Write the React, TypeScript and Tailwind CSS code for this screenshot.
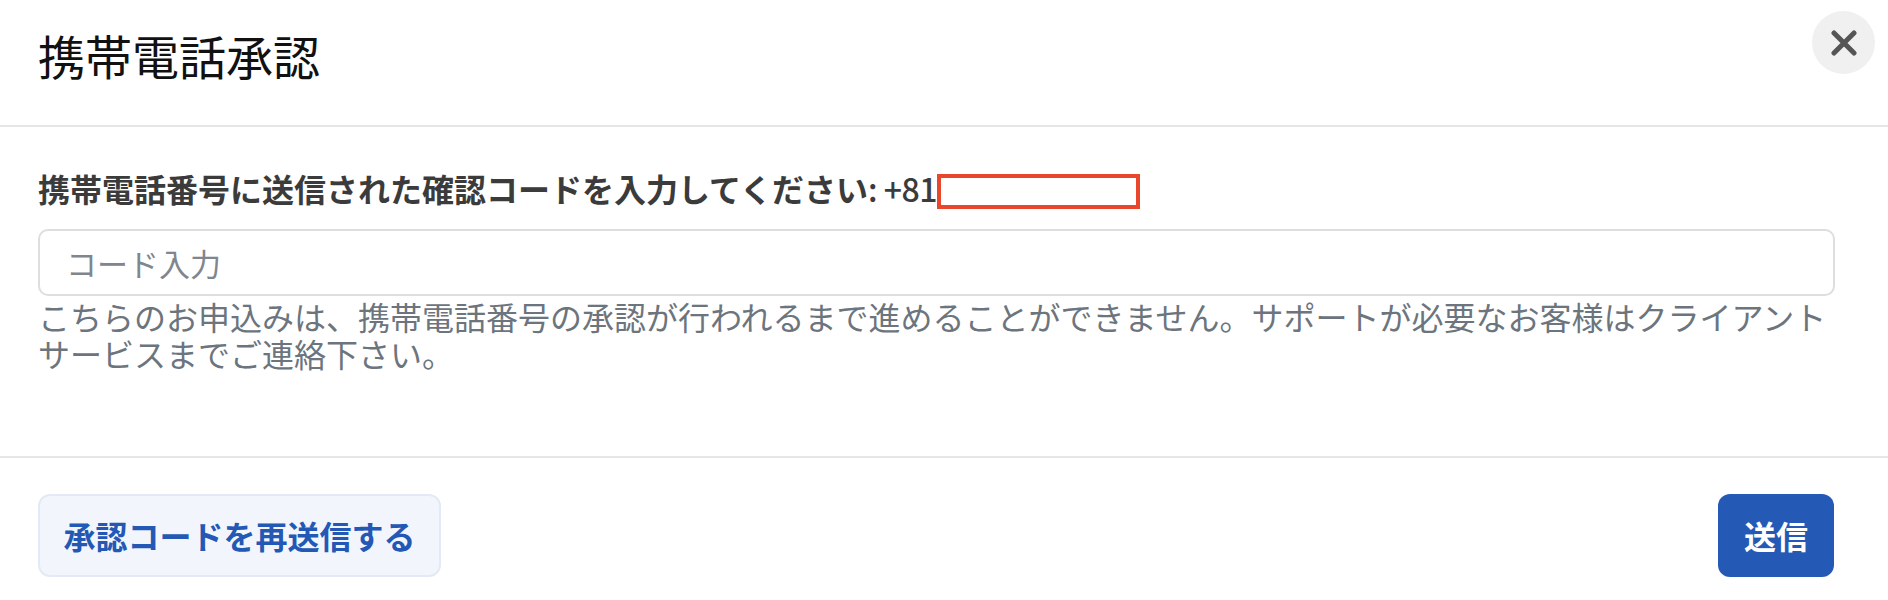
import React from "react";

// Mobile phone verification dialog (Japanese)
const FONT = "font-['Noto_Sans_CJK_JP','Noto_Sans',sans-serif]";

function CloseIcon() {
  return (
    <svg width="26" height="26" viewBox="0 0 26 26" fill="none" aria-hidden="true">
      <path d="M3 3L23 23M23 3L3 23" stroke="#555555" strokeWidth="5" strokeLinecap="round" />
    </svg>
  );
}

export default function App() {
  return (
    <div className={`w-[1888px] h-[600px] bg-white overflow-hidden flex flex-col ${FONT}`}>
      {/* Header */}
      <div className="flex justify-between items-start h-[127px] border-b-2 border-[#e6e6e6] shrink-0">
        <h1 className="pl-[38px] pt-[27px] text-[47px] leading-[56px] font-normal text-[#111111]">
          携帯電話承認
        </h1>
        <button className="mt-[11px] mr-[13px] w-[63px] h-[63px] rounded-full bg-[#f0f0f0] flex items-center justify-center">
          <CloseIcon />
        </button>
      </div>

      {/* Body */}
      <div className="pl-[38px] pr-[53px] pt-[41px] pb-[84px] shrink-0">
        <label className="block text-[32px] leading-[40px] font-bold text-[#3b3b3b] whitespace-nowrap">
          携帯電話番号に送信された確認コードを入力してください
          <span className="font-medium tracking-[-0.5px]">: +81</span>
          <span className="inline-block align-middle -mt-[4px] w-[203px] h-[35px] border-4 border-[#e9472c]" />
        </label>
        <input
          type="text"
          placeholder="コード入力"
          className="mt-[20px] block w-full h-[67px] rounded-[10px] border-2 border-[#dedede] px-[26px] text-[31px] text-[#333333] placeholder:text-[#80868e] outline-none"
        />
        <p className="mt-[2px] text-[32px] leading-[37px] text-[#6c757d]">
          こちらのお申込みは、携帯電話番号の承認が行われるまで進めることができません。サポートが必要なお客様はクライアントサービスまでご連絡下さい。
        </p>
      </div>

      {/* Footer */}
      <div className="flex-1 border-t-2 border-[#e6e6e6] flex justify-between items-start pt-[36px] pl-[38px] pr-[54px]">
        <button className="h-[83px] w-[403px] rounded-[12px] border-2 border-[#e3eaf5] bg-[#f2f6fc] text-[32px] font-bold text-[#2458b5] flex items-center justify-center">
          承認コードを再送信する
        </button>
        <button className="h-[83px] w-[116px] rounded-[12px] bg-[#2459b6] text-[32px] font-bold text-white flex items-center justify-center">
          送信
        </button>
      </div>
    </div>
  );
}
